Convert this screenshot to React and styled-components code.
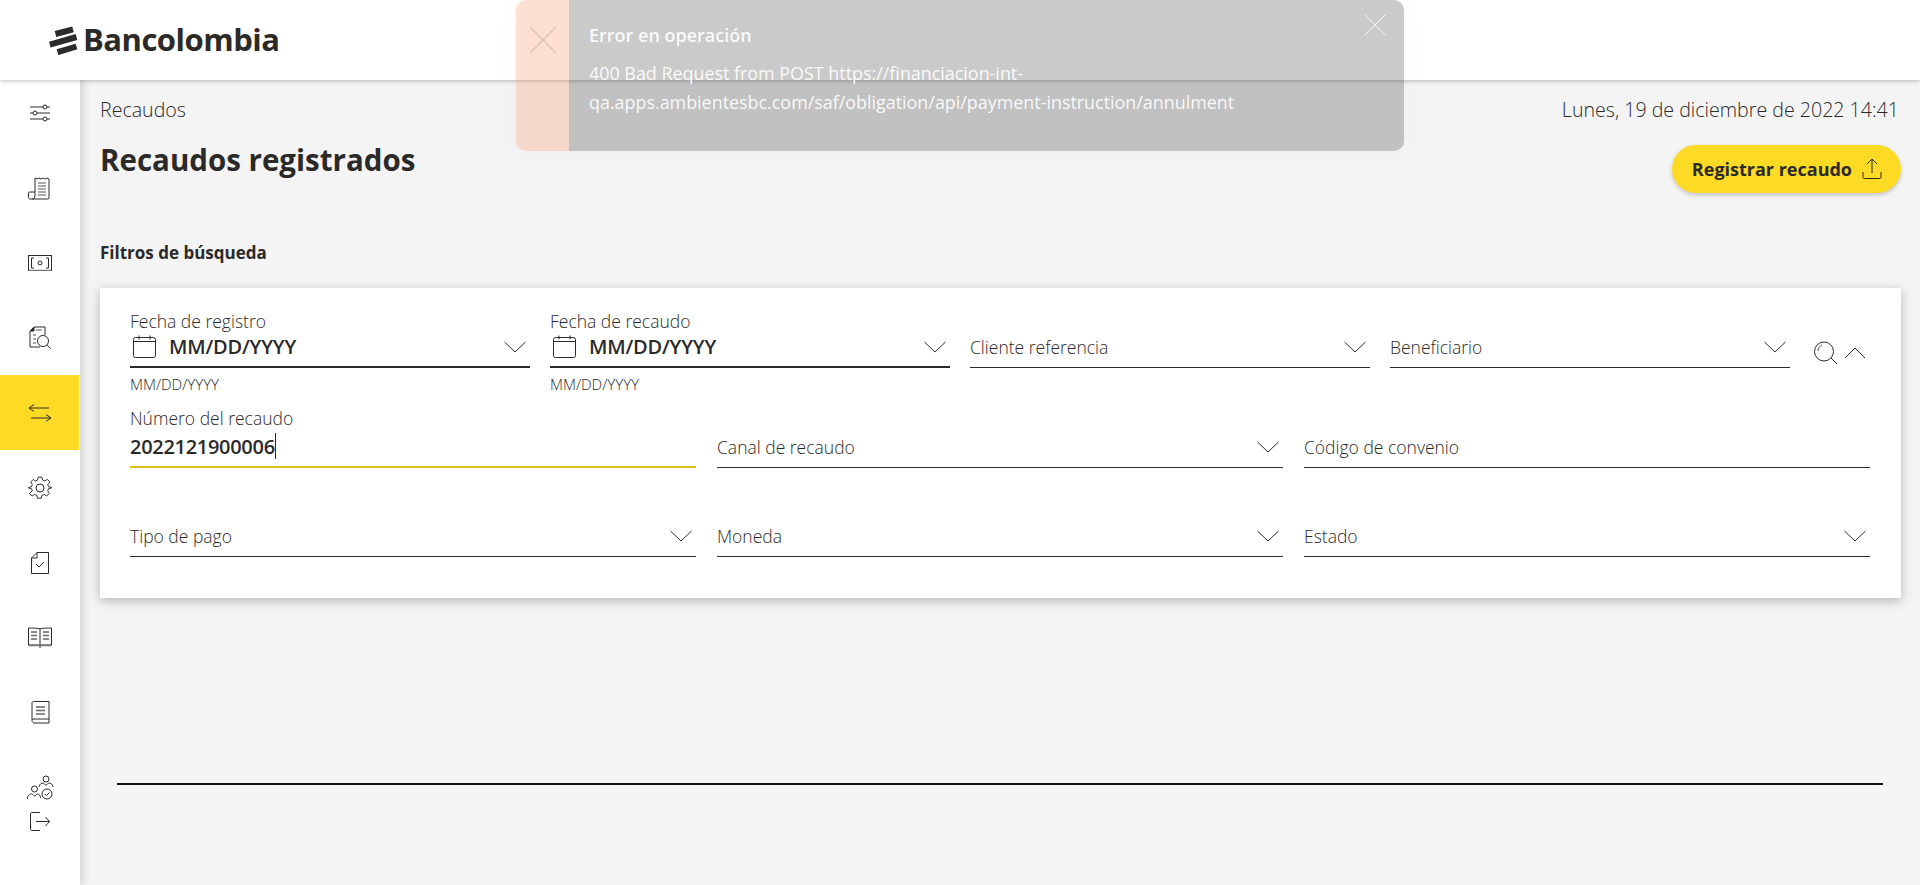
import React from "react";
import styled, { createGlobalStyle } from "styled-components";

const GlobalStyle = createGlobalStyle`
  html, body {
    margin: 0;
    height: 100%;
    overflow: hidden;
    background: #f4f4f4;
    font-family: "Open Sans", "Liberation Sans", sans-serif;
    color: #2c2a29;
  }
  * { box-sizing: border-box; }
`;

const Page = styled.div`
  height: 885px;
  display: flex;
  flex-direction: column;
  position: relative;
`;

const Header = styled.header`
  height: 80px;
  flex: none;
  background: #fff;
  box-shadow: 0 1px 4px rgba(0, 0, 0, 0.25);
  position: relative;
  z-index: 2;
  display: flex;
  align-items: center;
  padding-left: 49px;
  gap: 5px;
`;

const LogoText = styled.span`
  font-size: 31px;
  font-weight: 700;
  letter-spacing: -0.5px;
  color: #2c2a29;
  line-height: 1;
  margin-top: -2px;
`;

const Body = styled.div`
  flex: 1;
  display: flex;
  min-height: 0;
`;

const Sidebar = styled.nav`
  width: 80px;
  flex: none;
  margin-top: -5px;
  background: #fff;
  box-shadow: 3px 0 8px rgba(0, 0, 0, 0.15);
  position: relative;
  z-index: 1;
  display: flex;
  flex-direction: column;
`;

const NavItem = styled.div`
  height: ${(p) => p.$h || 75}px;
  margin-right: 1px;
  display: flex;
  justify-content: center;
  align-items: ${(p) => (p.$top ? "flex-start" : "center")};
  padding-top: ${(p) => p.$top || 0}px;
  padding-left: 1px;
  background: ${(p) => (p.$active ? "#fdda24" : "transparent")};
`;

const Main = styled.main`
  flex: 1;
  min-width: 0;
  padding: 18px 19px 0 20px;
  display: flex;
  flex-direction: column;
`;

const TopRow = styled.div`
  display: flex;
  justify-content: space-between;
  align-items: flex-start;
`;

const Crumb = styled.div`
  font-size: 19.6px;
  line-height: 24px;
  font-weight: 300;
`;

const DateText = styled.div`
  font-size: 19.6px;
  line-height: 24px;
  font-weight: 300;
  margin-right: 2px;
`;

const TitleRow = styled.div`
  display: flex;
  justify-content: space-between;
  align-items: flex-start;
  margin-top: 17px;
`;

const Title = styled.h1`
  margin: 0;
  font-size: 29.5px;
  line-height: 42px;
  font-weight: 700;
`;

const UploadButton = styled.button`
  width: 229px;
  height: 48px;
  margin-top: 6px;
  border: 0;
  border-radius: 24px;
  background: #fdda24;
  box-shadow: 0 2px 4px rgba(0, 0, 0, 0.2);
  color: #2c2a29;
  font: 700 18px "Open Sans", sans-serif;
  display: flex;
  align-items: center;
  justify-content: flex-end;
  padding: 0 19px 0 0;
  gap: 10px;
`;

const SectionLabel = styled.div`
  font-size: 17px;
  line-height: 26px;
  font-weight: 700;
  margin-top: 47px;
`;

const Card = styled.section`
  width: 1801px;
  height: 310px;
  margin-top: 22px;
  background: #fff;
  box-shadow: 0 3px 10px rgba(0, 0, 0, 0.25);
  padding: 21px 31px 0 30px;
`;

const RowOne = styled.div`
  display: grid;
  grid-template-columns: repeat(4, 400px) 1fr;
  column-gap: 20px;
  height: 97px;
`;

const RowThree = styled.div`
  display: grid;
  grid-template-columns: repeat(3, 1fr);
  column-gap: 21px;
  height: ${(p) => p.$h}px;
`;

const Field = styled.div`
  display: flex;
  flex-direction: column;
  justify-content: flex-end;
  height: ${(p) => p.$h || 56}px;
`;

const FieldLabel = styled.label`
  display: block;
  font-size: 17.5px;
  line-height: 24px;
  font-weight: 300;
`;

const FieldLine = styled.div`
  height: ${(p) => p.$h || 34}px;
  display: flex;
  align-items: center;
  justify-content: space-between;
  border-bottom: ${(p) => (p.$bold || p.$focus ? 2 : 1)}px solid ${(p) => (p.$focus ? "#e2c018" : "#2c2a29")};
  font-size: 17.5px;
  padding: 0 4px ${(p) => (p.$focus ? 4 : p.$bold ? 6 : 8)}px 0;
`;

const PlaceholderText = styled.span`
  font-weight: 300;
`;

const DateValue = styled.span`
  display: flex;
  align-items: center;
  gap: 13px;
  padding-left: 3px;
  font-size: 20px;
  font-weight: 600;
  letter-spacing: -0.2px;
`;

const Hint = styled.div`
  font-size: 15px;
  line-height: 18px;
  font-weight: 300;
  margin-top: 7px;
`;

const ValueText = styled.span`
  font-size: 20px;
  font-weight: 600;
  letter-spacing: -0.3px;
  display: flex;
  align-items: center;
`;

const Caret = styled.span`
  display: inline-block;
  width: 1px;
  height: 26px;
  background: #2c2a29;
`;

const RowIcons = styled.div`
  display: flex;
  align-items: center;
  height: 36px;
  margin-top: 26px;
  padding-left: 3px;
  gap: 5px;
`;

const Divider = styled.hr`
  width: 1766px;
  margin: 185px 0 0 17px;
  border: 0;
  border-top: 2px solid #111;
`;

const Toast = styled.div`
  position: absolute;
  left: 516px;
  top: 0;
  width: 888px;
  height: 151px;
  border-radius: 10px;
  overflow: hidden;
  z-index: 5;
  display: flex;
  box-shadow: 0 0 24px rgba(0, 0, 0, 0.03);
`;

const ToastSide = styled.div`
  width: 53px;
  background: rgba(250, 140, 90, 0.27);
  display: flex;
  align-items: center;
  justify-content: center;
  padding-bottom: 72px;
`;

const ToastBody = styled.div`
  flex: 1;
  background: rgba(0, 0, 0, 0.207);
  padding: 22px 0 0 20px;
  color: rgba(255, 255, 255, 0.92);
  position: relative;
`;

const ToastTitle = styled.div`
  font-size: 18px;
  line-height: 26px;
  font-weight: 600;
`;

const ToastMessage = styled.div`
  font-size: 17.9px;
  line-height: 29px;
  font-weight: 400;
  margin-top: 11px;
`;

const ToastClose = styled.span`
  position: absolute;
  right: 18px;
  top: 14px;
  display: flex;
`;

const Line = (props) => (
  <svg fill="none" stroke="#2c2a29" strokeWidth="1" {...props} />
);

const LogoMark = () => (
  <svg width="29" height="29" viewBox="0 0 29 29">
    <path d="M6.500 8 24 3.300M.8 18.600 27.500 11M8.500 26.200 27.500 20.500" stroke="#2c2a29" strokeWidth="6" fill="none" />
  </svg>
);

const Sliders = () => (
  <Line width="22" height="18" viewBox="0 0 22 18">
    <path d="M1 3h13M18 3h3M1 9h3M8 9h13M1 15h13M18 15h3" />
    <circle cx="16" cy="3" r="2" />
    <circle cx="6" cy="9" r="2" />
    <circle cx="16" cy="15" r="2" />
  </Line>
);

const Receipt = () => (
  <Line width="24" height="24" viewBox="0 0 24 24">
    <path d="M7 19V2l2 1 2-1 2 1 2-1 2 1 2-1 2 1v19c0 .6-.4 1-1 1H2c-.8 0-1.500-.6-1.500-1.500V17c0-.5.4-1 1-1H7" />
    <path d="M4 23c2 0 3-1 3-4" />
    <path d="M10 7h8M10 10h8M10 13h8M10 16h8M10 19h8" stroke="#555" strokeWidth="1.200" />
  </Line>
);

const Bill = () => (
  <Line width="24" height="16" viewBox="0 0 24 16">
    <rect x=".5" y=".5" width="23" height="15" />
    <path d="M6 3H3.500v10H6M18 3h2.500v10H18" />
    <circle cx="12" cy="8" r="2" />
    <path d="M.5 15.500h23" stroke="#777" strokeWidth="1.500" />
  </Line>
);

const DocSearch = () => (
  <Line width="22" height="24" viewBox="0 0 22 24">
    <path d="M11 21H1V5l4-4h11v8" />
    <path d="M1 5h4V1z" fill="#2c2a29" />
    <path d="M7 4h6M4 9h3M4 13h3M4 17h3" stroke="#555" />
    <circle cx="14" cy="15" r="5.500" />
    <path d="m18 19 3.500 3.500" />
  </Line>
);

const Arrows = () => (
  <Line width="24" height="18" viewBox="0 0 24 18">
    <path d="M1 4h20M6 .5 1 4l5 3.500" />
    <path d="M3 14h20M18 10.500l5 3.500-5 3.500" />
  </Line>
);

const Gear = () => (
  <Line width="24" height="24" viewBox="0 0 24 24">
    <circle cx="12" cy="12" r="4" />
    <path d="M10 1h4l.6 3 2.400 1 2.600-1.700 2.800 2.800L20 8.700l1 2.400 3 .6v.6l-3 .6-1 2.400 1.700 2.600-2.800 2.800-2.600-1.700-2.400 1-.6 3h-4l-.6-3-2.400-1-2.600 1.700-2.800-2.800L4 15.300l-1-2.400-3-.6v-.6l3-.6 1-2.400-1.700-2.600 2.800-2.800L7 5l2.400-1z" transform="translate(.5 .2) scale(.96)" />
  </Line>
);

const DocCheck = () => (
  <Line width="18" height="22" viewBox="0 0 18 22">
    <path d="M6 .5h11.500v21H.5V6z" />
    <path d="M.5 6H6V.5" />
    <path d="m5 12 3 3 5-5" />
  </Line>
);

const Book = () => (
  <Line width="24" height="21" viewBox="0 0 24 21">
    <path d="M12 2C10 1 4 1 .5 1v17H12V2C14 1 20 1 23.500 1v17H12v3" />
    <path d="M3 5h6M3 8.500h6M3 12h6M15 5h6M15 8.500h6M15 12h6" stroke="#666" strokeWidth="1.300" />
    <path d="M.5 18.500h23" stroke="#777" strokeWidth="1.500" />
  </Line>
);

const Manual = () => (
  <Line width="19" height="23" viewBox="0 0 19 23">
    <path d="M1 19V2c0-.8.5-1.500 1.500-1.500H18V18H3c-1.500 0-2 .5-2 1.500S2 22 3 22h15v-4" />
    <path d="M5 6h9M5 9.500h9M5 13h9" stroke="#666" strokeWidth="1.300" />
  </Line>
);

const People = () => (
  <Line width="27" height="26" viewBox="0 0 27 26">
    <circle cx="19" cy="4" r="3" />
    <path d="M12 12c0-3 3-4 4-4s2 2 3 2 2-2 3-2 4 1 4 4" />
    <circle cx="7.500" cy="14" r="3" />
    <path d="M.5 24c0-4 2-5 4-5s2 2 3 2 2-2 3-2 3 1 3 4" />
    <circle cx="20" cy="19" r="5" />
    <path d="m18 19 1.500 1.500 3-3" />
  </Line>
);

const Logout = () => (
  <Line width="20" height="19" viewBox="0 0 20 19">
    <path d="M10 .5H2C1 .5.500 1 .500 2v15c0 1 .5 1.500 1.500 1.500h8" />
    <path d="M6 9.500h13.500M15.500 5l4 4.500-4 4.500" />
  </Line>
);

const Upload = () => (
  <Line width="20" height="22" viewBox="0 0 20 22">
    <path d="M10 15V1M5 6l5-5 5 5" />
    <path d="M1 14v5c0 1 .6 1.500 1.500 1.500h15c1 0 1.500-.5 1.500-1.500v-5" />
  </Line>
);

const Calendar = () => (
  <Line width="23" height="23" viewBox="0 0 23 23">
    <rect x=".5" y="2.500" width="22" height="20" rx="2" />
    <path d="M.5 6.500h22M6 .5v4M17 .5v4" />
  </Line>
);

const ChevronDown = () => (
  <Line width="22" height="12" viewBox="0 0 22 12">
    <path d="m.5 1 10.500 10L21.500 1" />
  </Line>
);

const ChevronUp = () => (
  <Line width="22" height="12" viewBox="0 0 22 12">
    <path d="m1 11 10-10 10 10" />
  </Line>
);

const SearchIcon = () => (
  <Line width="26" height="24" viewBox="0 0 26 24">
    <circle cx="11" cy="10.500" r="9.500" />
    <path d="m18 17 6 6" />
    <path d="M5 10c0-3 2-5 4-6" strokeWidth=".8" />
  </Line>
);

const CloseX = ({ size, color }) => (
  <svg width={size} height={size} viewBox="0 0 24 24" fill="none" stroke={color} strokeWidth="1">
    <path d="m1 1 22 22M23 1 1 23" />
  </svg>
);

const navIcons = [Sliders, Receipt, Bill, DocSearch, Arrows, Gear, DocCheck, Book, Manual];

const SelectField = ({ label, h }) => (
  <Field $h={h}>
    <FieldLine>
      <PlaceholderText>{label}</PlaceholderText>
      <ChevronDown />
    </FieldLine>
  </Field>
);

const DateField = ({ label }) => (
  <div>
    <FieldLabel>{label}</FieldLabel>
    <FieldLine $bold $h={35}>
      <DateValue>
        <Calendar />
        MM/DD/YYYY
      </DateValue>
      <ChevronDown />
    </FieldLine>
    <Hint>MM/DD/YYYY</Hint>
  </div>
);

export default function App() {
  return (
    <Page>
      <GlobalStyle />
      <Header>
        <LogoMark />
        <LogoText>Bancolombia</LogoText>
      </Header>
      <Body>
        <Sidebar>
          {navIcons.map((Icon, i) => (
            <NavItem key={i} $active={i === 4}>
              <Icon />
            </NavItem>
          ))}
          <NavItem $h={54} $top={25}>
            <People />
          </NavItem>
          <NavItem $h={34}>
            <Logout />
          </NavItem>
        </Sidebar>
        <Main>
          <TopRow>
            <Crumb>Recaudos</Crumb>
            <DateText>Lunes, 19 de diciembre de 2022 14:41</DateText>
          </TopRow>
          <TitleRow>
            <Title>Recaudos registrados</Title>
            <UploadButton>
              Registrar recaudo
              <Upload />
            </UploadButton>
          </TitleRow>
          <SectionLabel>Filtros de búsqueda</SectionLabel>
          <Card>
            <RowOne>
              <DateField label="Fecha de registro" />
              <DateField label="Fecha de recaudo" />
              <SelectField label="Cliente referencia" h={59} />
              <SelectField label="Beneficiario" h={59} />
              <RowIcons>
                <SearchIcon />
                <ChevronUp />
              </RowIcons>
            </RowOne>
            <RowThree $h={95}>
              <div>
                <FieldLabel>Número del recaudo</FieldLabel>
                <FieldLine $focus $h={38}>
                  <ValueText>
                    2022121900006
                    <Caret />
                  </ValueText>
                </FieldLine>
              </div>
              <SelectField label="Canal de recaudo" h={62} />
              <Field $h={62}>
                <FieldLine>
                  <PlaceholderText>Código de convenio</PlaceholderText>
                </FieldLine>
              </Field>
            </RowThree>
            <RowThree $h={56}>
              <SelectField label="Tipo de pago" />
              <SelectField label="Moneda" />
              <SelectField label="Estado" />
            </RowThree>
          </Card>
          <Divider />
        </Main>
      </Body>
      <Toast>
        <ToastSide>
          <CloseX size={28} color="rgba(120,120,120,.35)" />
        </ToastSide>
        <ToastBody>
          <ToastTitle>Error en operación</ToastTitle>
          <ToastMessage>
            400 Bad Request from POST https://financiacion-int-
            <br />
            qa.apps.ambientesbc.com/saf/obligation/api/payment-instruction/annulment
          </ToastMessage>
          <ToastClose>
            <CloseX size={22} color="rgba(255,255,255,.95)" />
          </ToastClose>
        </ToastBody>
      </Toast>
    </Page>
  );
}
